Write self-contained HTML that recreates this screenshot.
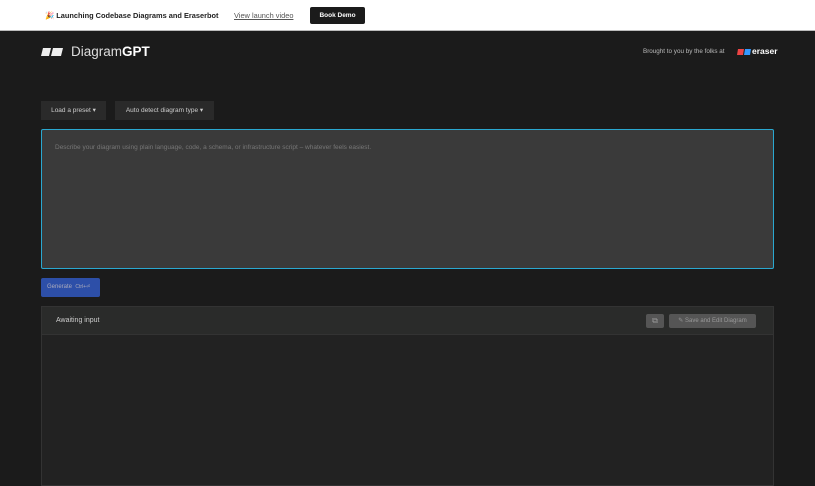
<!DOCTYPE html>
<html><head><style>
*{margin:0;padding:0;box-sizing:border-box}
body{width:815px;height:480px;overflow:hidden;background:#1b1b1b;font-family:"Liberation Sans",sans-serif;position:relative}
.top{position:absolute;left:0;top:0;width:815px;height:31px;background:#fff;border-bottom:1px solid #bbb}
.abs{position:absolute}
</style></head><body>
<div class="top">
<div class="abs" style="left:45px;top:11px;font-size:7.4px;font-weight:bold;color:#222">🎉 Launching Codebase Diagrams and Eraserbot</div>
<div class="abs" style="left:234px;top:11px;font-size:7.4px;color:#555;text-decoration:underline">View launch video</div>
<div class="abs" style="left:310px;top:7px;width:55px;height:17px;background:#1b1b1b;border-radius:2px;color:#fff;font-size:6.5px;font-weight:bold;text-align:center;line-height:17px">Book Demo</div>
</div>
<svg class="abs" style="left:41px;top:48px" width="22" height="8"><polygon points="2,0 10,0 8,8 0,8" fill="#eee"/><polygon points="12,0 22,0 20,8 10,8" fill="#eee"/></svg>
<div class="abs" style="left:71px;top:44px;font-size:13.5px;color:#ddd">Diagram<b style="color:#fff">GPT</b></div>
<div class="abs" style="left:643px;top:48px;font-size:6.3px;color:#bbb">Brought to you by the folks at</div>
<svg class="abs" style="left:737px;top:49px" width="14" height="6"><polygon points="1,0 7,0 6,6 0,6" fill="#e44"/><polygon points="8,0 14,0 13,6 7,6" fill="#39f"/></svg>
<div class="abs" style="left:752px;top:46px;font-size:8.5px;font-weight:bold;color:#fff">eraser</div>
<div class="abs" style="left:41px;top:101px;width:65px;height:19px;background:#2a2a2a;color:#ccc;font-size:6.5px;line-height:19px;text-align:center">Load a preset ▾</div>
<div class="abs" style="left:115px;top:101px;width:99px;height:19px;background:#2a2a2a;color:#ccc;font-size:6.5px;line-height:19px;text-align:center">Auto detect diagram type ▾</div>
<div class="abs" style="left:41px;top:129px;width:733px;height:140px;background:#3a3a3a;border:1px solid #2aa8d0;border-radius:2px">
<div style="position:absolute;left:13px;top:14px;font-size:6.5px;color:#777">Describe your diagram using plain language, code, a schema, or infrastructure script – whatever feels easiest.</div></div>
<div class="abs" style="left:41px;top:278px;width:59px;height:19px;background:#2d4fa8;border-radius:2px;color:#aab;font-size:6px;line-height:19px;padding-left:6px">Generate &nbsp;<span style="font-size:5px">Ctrl+⏎</span></div>
<div class="abs" style="left:41px;top:306px;width:733px;height:180px;background:#222;border:1px solid #333">
<div style="height:28px;background:#2a2b2a;border-bottom:1px solid #333;position:relative">
<div class="abs" style="left:14px;top:10px;font-size:7px;color:#ccc">Awaiting input</div>
<div class="abs" style="left:604px;top:7px;width:18px;height:14px;background:#555;border-radius:2px;color:#999;font-size:8px;line-height:14px;text-align:center">⧉</div>
<div class="abs" style="left:627px;top:7px;width:87px;height:14px;background:#555;border-radius:2px;color:#999;font-size:6px;line-height:14px;text-align:center">✎ Save and Edit Diagram</div>
</div></div>
</body></html>
